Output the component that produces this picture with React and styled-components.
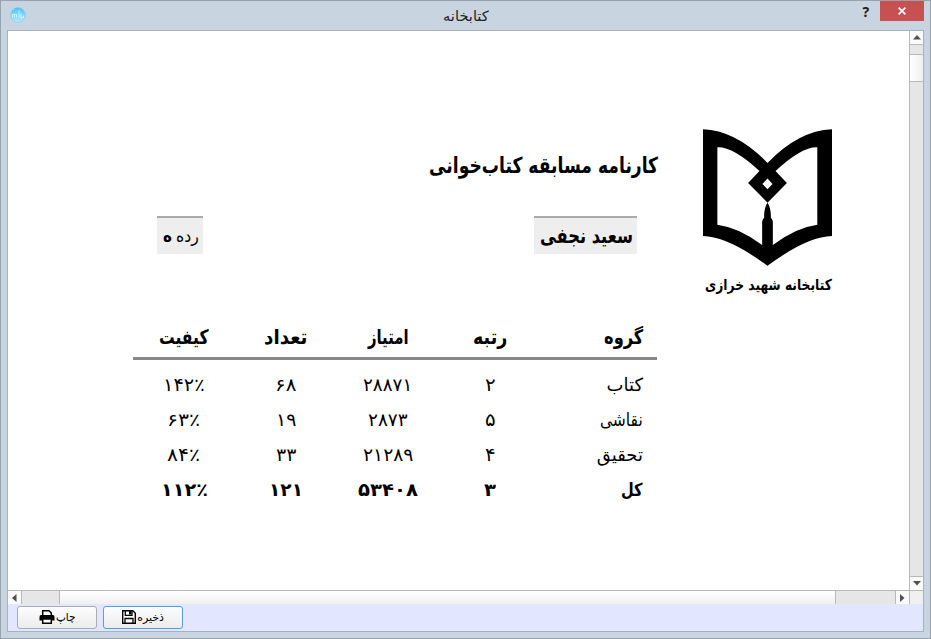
import React, { useLayoutEffect, useRef, useState } from "react";
import styled, { createGlobalStyle } from "styled-components";

const GlobalStyle = createGlobalStyle`
  * { box-sizing: border-box; }
  body { margin: 0; overflow: hidden; font-family: "DejaVu Sans", sans-serif; color: #000; }
`;

const Window = styled.div`
  width: 931px;
  height: 639px;
  display: flex;
  flex-direction: column;
  padding: 0 6px 6px;
  background: #c8d5e0;
  border: 1px solid #98a3ae;
`;

const TitleBar = styled.header`
  height: 29px;
  flex: none;
  display: grid;
  grid-template-columns: 70px 1fr 72px;
  align-items: start;
`;

const AppIcon = styled.svg`
  display: block;
  margin: 6px 0 0 3px;
`;

const Caption = styled.h1`
  margin: 4px 0 0 2px;
  height: 20px;
  display: flex;
  justify-content: center;
  font-weight: 400;
  color: #222;
`;

const WindowButtons = styled.div`
  display: flex;
  justify-content: flex-end;
  align-items: flex-start;
`;

const HelpButton = styled.button`
  width: 28px;
  height: 20px;
  padding: 0;
  border: 0;
  background: none;
  font: 700 14px/21px "Noto Sans", sans-serif;
  color: #1e1e1e;
`;

const CloseButton = styled.button`
  width: 45px;
  height: 20px;
  padding: 0;
  border: 0;
  display: grid;
  place-items: center;
  background: #c75050;
`;

const Client = styled.main`
  flex: 1;
  width: 917px;
  display: grid;
  grid-template: 559px 14px 1fr / 901px 14px;
  border: 1px solid #a6b2be;
  background: #e2e7ff;
`;

const Page = styled.section`
  display: flex;
  justify-content: space-between;
  padding: 98px 76px 0 125px;
  background: #fff;
`;

const Report = styled.div`
  width: 525px;
`;

const Line = styled.div`
  display: flex;
  justify-content: ${(p) => p.$justify || "center"};
  height: ${(p) => p.$height}px;
  padding-top: ${(p) => p.$top || 0}px;
`;

const Badges = styled.div`
  display: flex;
  justify-content: space-between;
  padding: 0 21px 0 24px;
  margin-top: 12px;
`;

const Badge = styled.div`
  direction: rtl;
  display: flex;
  gap: 4px;
  width: ${(p) => p.$width}px;
  height: 38px;
  padding: ${(p) => p.$top}px 4px 0 0;
  background: #eee;
  border-top: 2px solid #aaa;
`;

const Table = styled.div`
  direction: rtl;
  margin-top: 66px;
  width: 524px;
`;

const Row = styled.div`
  display: grid;
  grid-template-columns: 116px repeat(4, 102px);
  height: 35px;
`;

const HeadRow = styled(Row)`
  height: 40px;
  padding-top: 1px;
  border-bottom: 3px solid #888;
  margin-bottom: 11px;
`;

const Cell = styled.div`
  display: flex;
  justify-content: ${(p) => (p.$first ? "flex-start" : "center")};
  padding-right: ${(p) => (p.$first ? 14 : 0)}px;
`;

const Brand = styled.aside`
  width: 130px;
  display: flex;
  flex-direction: column;
  align-items: center;
`;

const Logo = styled.svg`
  display: block;
  margin-right: 1px;
`;

const Bar = styled.div`
  display: flex;
  flex-direction: ${(p) => (p.$vertical ? "column" : "row")};
  background: #e6e6e6;
  border: 0 solid #b9b9b9;
  border-width: ${(p) => (p.$vertical ? "0 0 0 1px" : "1px 0 0 0")};
`;

const Arrow = styled.div`
  flex: 0 0 13px;
  display: grid;
  place-items: center;
  background: #fafafa;
`;

const Track = styled.div`
  flex: ${(p) => (p.$size ? `0 0 ${p.$size}px` : "1")};
  border: 0 solid #b9b9b9;
  border-width: ${(p) => (p.$vertical ? "1px 0" : "0 1px")};
`;

const Thumb = styled.div`
  flex: 0 0 ${(p) => p.$size}px;
  background: linear-gradient(${(p) => (p.$vertical ? "to right" : "to bottom")}, #fff, #f0f0f0);
`;

const Corner = styled.div`
  background: #f0f0f0;
  border: 1px solid #b9b9b9;
  border-width: 1px 0 0 1px;
`;

const Footer = styled.footer`
  grid-column: 1 / -1;
  display: flex;
  gap: 6px;
  padding: 2px 0 0 9px;
`;

const Button = styled.button`
  width: 80px;
  height: 23px;
  padding: 0;
  display: flex;
  align-items: center;
  justify-content: center;
  gap: 1px;
  color: #000;
  border: 1px solid ${(p) => (p.$active ? "#569de5" : "#acacac")};
  border-radius: 3px;
  background: linear-gradient(#fdfdfd, #ececec);

  svg {
    margin-bottom: 2px;
  }
`;

const Slot = styled.span`
  display: flex;
  direction: rtl;
  flex: none;
  width: ${(p) => p.$width}px;
  height: ${(p) => p.$size * 1.6}px;
`;

const Glyphs = styled.span`
  flex: none;
  white-space: nowrap;
  transform-origin: right center;
  font-family: "DejaVu Sans", sans-serif;
  font-size: ${(p) => p.$size}px;
  line-height: 1.6;
  font-weight: ${(p) => (p.$bold ? 700 : 400)};
`;

function Fit({ width, size, bold, children }) {
  const ref = useRef(null);
  const [scale, setScale] = useState(1);
  useLayoutEffect(() => {
    setScale(width / ref.current.offsetWidth);
  }, [width, size, children]);
  return (
    <Slot $width={width} $size={size}>
      <Glyphs ref={ref} $size={size} $bold={bold} style={{ transform: `scaleX(${scale})` }}>
        {children}
      </Glyphs>
    </Slot>
  );
}

const arrows = {
  up: "M0 4.5 L4 0 L8 4.5Z",
  down: "M0 0 H8 L4 4.5Z",
  left: "M4.5 0 V8 L0 4Z",
  right: "M0 0 V8 L4.5 4Z",
};

function ScrollArrow({ dir }) {
  const upright = dir === "up" || dir === "down";
  return (
    <Arrow>
      <svg width={upright ? 8 : 5} height={upright ? 5 : 8}>
        <path d={arrows[dir]} fill="#505050" />
      </svg>
    </Arrow>
  );
}

const head = [["گروه", 39], ["رتبه", 34], ["امتیاز", 41], ["تعداد", 43], ["کیفیت", 50]];
const rows = [
  [["کتاب", 36], ["۲", 11], ["۲۸۸۷۱", 49], ["۶۸", 21], ["۱۴۲٪", 42]],
  [["نقاشی", 43], ["۵", 11], ["۲۸۷۳", 40], ["۱۹", 20], ["۶۳٪", 33]],
  [["تحقیق", 46], ["۴", 11], ["۲۱۲۸۹", 50], ["۳۳", 20], ["۸۴٪", 33]],
  [["کل", 22], ["۳", 12], ["۵۳۴۰۸", 60], ["۱۲۱", 34], ["۱۱۲٪", 47]],
];

function cells(items, size, bold) {
  return items.map(([text, width], i) => (
    <Cell key={i} $first={i === 0}>
      <Fit width={width} size={size} bold={bold}>{text}</Fit>
    </Cell>
  ));
}

export default function App() {
  return (
    <>
      <GlobalStyle />
      <Window>
        <TitleBar>
          <AppIcon width="16" height="16" viewBox="0 0 16 16">
            <defs>
              <linearGradient id="sky" x2="0" y2="1">
                <stop offset="0" stopColor="#45c5ff" />
                <stop offset="1" stopColor="#b8e8ff" />
              </linearGradient>
            </defs>
            <circle cx="8" cy="8" r="7.5" fill="url(#sky)" stroke="#8bcbea" strokeWidth=".6" />
            <path d="M2.5 10.5V7.5H4.5V10M4.5 7.5H6.5V10.5M9 3.5V10.5M11 6.5V10.5H13.5V8.5" fill="none" stroke="#d4f3ff" strokeWidth="1" />
          </AppIcon>
          <Caption><Fit width={46} size={14}>کتابخانه</Fit></Caption>
          <WindowButtons>
            <HelpButton>?</HelpButton>
            <CloseButton>
              <svg width="8" height="8" viewBox="0 0 8 8">
                <path d="M.6.6 7.4 7.4M7.4.6.6 7.4" stroke="#fff" strokeWidth="1.7" />
              </svg>
            </CloseButton>
          </WindowButtons>
        </TitleBar>
        <Client>
          <Page>
            <Report>
              <Line $justify="flex-end" $height={75} $top={19}>
                <Fit width={229} size={22} bold>کارنامه مسابقه کتاب‌خوانی</Fit>
              </Line>
              <Badges>
                <Badge $width={46} $top={5}>
                  <Fit width={23} size={17}>رده</Fit>
                  <Fit width={9} size={17} bold>ه</Fit>
                </Badge>
                <Badge $width={103} $top={2}>
                  <Fit width={93} size={21} bold>سعید نجفی</Fit>
                </Badge>
              </Badges>
              <Table>
                <HeadRow>{cells(head, 20, true)}</HeadRow>
                {rows.map((r, i) => (
                  <Row key={i}>{cells(r, 18, i === 3)}</Row>
                ))}
              </Table>
            </Report>
            <Brand>
              <Logo width="129" height="137" viewBox="0 0 386 409">
                <path
                  fillRule="evenodd"
                  d="M0 0Q100 4 193 101Q286 4 386 0V320Q310 322 193 409Q76 322 0 320Z
                  M43 54V286Q110 295 177 347V276Q178 270 183 265Q182 235 193 220L135 161L169 125Q90 52 43 54Z
                  M342 54V286Q276 295 209 347V276Q208 270 203 265Q204 235 193 220L251 161L217 125Q296 52 342 54Z
                  M193 148L208 164L193 180L178 164Z"
                />
              </Logo>
              <Line $height={30} $top={7}>
                <Fit width={127} size={15} bold>کتابخانه شهید خرازی</Fit>
              </Line>
            </Brand>
          </Page>
          <Bar $vertical>
            <ScrollArrow dir="up" />
            <Track $vertical $size={11} />
            <Thumb $vertical $size={26} />
            <Track $vertical />
            <ScrollArrow dir="down" />
          </Bar>
          <Bar>
            <ScrollArrow dir="left" />
            <Track $size={39} />
            <Thumb $size={775} />
            <Track />
            <ScrollArrow dir="right" />
          </Bar>
          <Corner />
          <Footer>
            <Button>
              <svg width="16" height="14" viewBox="0 0 16 14">
                <path d="M3.7 6V.8H10L12.3 3V6" fill="#fff" stroke="#000" strokeWidth="1.5" />
                <path d="M2 5H14Q15.5 5 15.5 7V10.5H.5V7Q.5 5 2 5Z" />
                <path d="M3.7 9H12.3V13.2H3.7Z" fill="#fff" stroke="#000" strokeWidth="1.5" />
              </svg>
              <Fit width={20} size={11}>چاپ</Fit>
            </Button>
            <Button $active>
              <svg width="14" height="14" viewBox="0 0 14 14">
                <path d="M.7.7H10.8L13.3 3.2V13.3H.7Z" fill="#fff" stroke="#000" strokeWidth="1.4" />
                <path d="M3.3 1V5.3H10V1M3 13V8.5H11V13" fill="none" stroke="#000" strokeWidth="1.3" />
                <path d="M7 1H9.3V4.5H7Z" />
              </svg>
              <Fit width={27} size={11}>ذخیره</Fit>
            </Button>
          </Footer>
        </Client>
      </Window>
    </>
  );
}
